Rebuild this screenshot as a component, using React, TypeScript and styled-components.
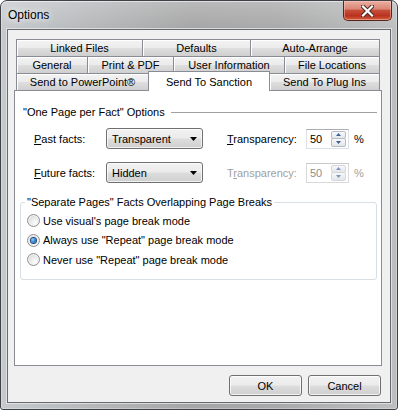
import styled, { createGlobalStyle } from 'styled-components';

const GlobalStyle = createGlobalStyle`
  html, body {
    margin: 0;
    padding: 0;
    background: #ffffff;
  }
  body {
    font-family: "Liberation Sans", Arial, sans-serif;
    font-size: 11px;
    color: #000000;
  }
  * { box-sizing: border-box; }
`;

const Window = styled.div`
  width: 398px;
  height: 410px;
  display: flex;
  flex-direction: column;
  padding: 0 6px 6px;
  border: 1px solid #3e4146;
  border-radius: 7px 7px 3px 3px;
  background:
    linear-gradient(180deg, rgba(255, 255, 255, 0.22) 0px, rgba(255, 255, 255, 0) 28px),
    linear-gradient(90deg, #c6cacd 0%, #b6b8ba 22%, #a6a6a6 48%, #a9a9a9 70%, #bcbebf 100%);
  box-shadow: inset 0 1px 0 rgba(255, 255, 255, 0.55), inset 1px 0 0 rgba(255, 255, 255, 0.3),
    inset -1px 0 0 rgba(255, 255, 255, 0.3), inset 0 -1px 0 rgba(255, 255, 255, 0.3);
`;

const TitleBar = styled.div`
  height: 28px;
  display: flex;
  align-items: flex-start;
  justify-content: space-between;
`;

const Title = styled.div`
  margin-top: 7px;
  padding-left: 1px;
  font-size: 12px;
  line-height: 15px;
  color: #000;
  text-shadow: 0 0 6px rgba(255, 255, 255, 0.95), 0 0 10px rgba(255, 255, 255, 0.7);
`;

const CloseButton = styled.div`
  width: 49px;
  height: 20px;
  margin-right: -1px;
  display: flex;
  align-items: center;
  justify-content: center;
  border: 1px solid #5b2419;
  border-top: none;
  border-radius: 0 0 5px 5px;
  background: linear-gradient(180deg, #eab0a2 0%, #db8676 42%, #c84d39 50%, #b9321e 78%, #d3603f 100%);
  box-shadow: inset 0 0 0 1px rgba(255, 210, 200, 0.45);
`;

const Client = styled.div`
  flex: 1;
  display: flex;
  flex-direction: column;
  padding: 9px 8px 6px 6px;
  background: #f0f0f0;
  border: 1px solid #676a6e;
  box-shadow: 0 0 0 1px rgba(235, 238, 240, 0.7);
`;

const TabStrip = styled.div`
  display: flex;
  flex-direction: column;
  margin: 0 2px -1px;
  position: relative;
  z-index: 2;
`;

const TabRow = styled.div`
  display: flex;
  align-items: flex-end;
  height: 18px;
  & + & {
    margin-top: -1px;
  }
`;

const Tab = styled.div<{ $w: number; $active?: boolean }>`
  width: ${p => p.$w}px;
  height: ${p => (p.$active ? 20 : 18)}px;
  flex: none;
  display: flex;
  align-items: ${p => (p.$active ? 'flex-start' : 'center')};
  justify-content: center;
  padding-top: ${p => (p.$active ? 3 : 0)}px;
  border: 1px solid #898c95;
  border-bottom: ${p => (p.$active ? 'none' : '1px solid #898c95')};
  background: ${p =>
    p.$active
      ? '#ffffff'
      : 'linear-gradient(180deg, #f3f3f3 0%, #ebebeb 48%, #dedede 52%, #cfcfcf 100%)'};
  box-shadow: ${p => (p.$active ? 'none' : 'inset 1px 1px 0 #ffffff')};
  position: relative;
  z-index: ${p => (p.$active ? 3 : 1)};
  white-space: nowrap;
  line-height: 14px;
  & + & {
    margin-left: -1px;
  }
`;

const Panel = styled.div`
  flex: 1;
  display: flex;
  flex-direction: column;
  padding: 14px 4px 0 5px;
  background: #ffffff;
  border: 1px solid #898c95;
  position: relative;
  z-index: 1;
`;

const GroupHeader = styled.div`
  display: flex;
  align-items: center;
  margin-left: 3px;
  line-height: 14px;
  height: 14px;
  &::after {
    content: '';
    flex: 1;
    margin-left: 6px;
    border-top: 1px solid #a0a0a0;
  }
`;

const FormRow = styled.div<{ $gap: number }>`
  display: flex;
  align-items: center;
  height: 21px;
  margin-top: ${p => p.$gap}px;
  padding-left: 14px;
`;

const FieldLabel = styled.span<{ $w: number; $ml?: number; $disabled?: boolean }>`
  width: ${p => p.$w}px;
  margin-left: ${p => p.$ml ?? 0}px;
  color: ${p => (p.$disabled ? '#a0a0a0' : '#000000')};
  white-space: nowrap;
`;

const Key = styled.span`
  text-decoration: underline;
`;

const Combo = styled.div`
  width: 97px;
  height: 21px;
  display: flex;
  align-items: center;
  justify-content: space-between;
  padding: 0 5px 0 5px;
  border: 1px solid #707070;
  border-radius: 3px;
  background: linear-gradient(180deg, #f2f2f2 0%, #ebebeb 48%, #dddddd 52%, #cfcfcf 100%);
  box-shadow: inset 0 0 0 1px rgba(255, 255, 255, 0.7);
`;

const SpinBox = styled.div<{ $disabled?: boolean }>`
  width: 43px;
  height: 20px;
  display: flex;
  align-items: stretch;
  justify-content: space-between;
  padding: 1px 2px 1px 3px;
  background: #ffffff;
  border: 1px solid ${p => (p.$disabled ? '#d9d9d9' : '#dbe1e8')};
  border-top-color: ${p => (p.$disabled ? '#c9c9c9' : '#abadb3')};
  color: ${p => (p.$disabled ? '#8d8d8d' : '#000000')};
`;

const SpinValue = styled.span`
  align-self: center;
`;

const SpinButtons = styled.div`
  width: 15px;
  display: flex;
  flex-direction: column;
  gap: 0;
`;

const SpinHalf = styled.div<{ $disabled?: boolean }>`
  flex: 1;
  display: flex;
  align-items: center;
  justify-content: center;
  border: 1px solid ${p => (p.$disabled ? '#d4d6d9' : '#b7bcc4')};
  border-radius: 2px;
  background: linear-gradient(180deg, #f8f8f8 0%, #e3e6ea 100%);
  & + & {
    margin-top: -1px;
  }
`;

const Percent = styled.span<{ $disabled?: boolean }>`
  margin-left: 5px;
  color: ${p => (p.$disabled ? '#a0a0a0' : '#000000')};
`;

const GroupBox = styled.fieldset`
  margin: 12px 0 0 0;
  padding: 2px 6px 9px 6px;
  border: 1px solid #d5dfe5;
  border-radius: 3px;
  min-width: 0;
`;

const Legend = styled.legend`
  padding: 0 2px;
  margin-left: -2px;
  line-height: 14px;
`;

const RadioRow = styled.div`
  height: 19.5px;
  display: flex;
  align-items: center;
  gap: 3px;
`;

const RadioDot = styled.span<{ $checked?: boolean }>`
  width: 13px;
  height: 13px;
  border-radius: 50%;
  border: 1px solid #8e8f8f;
  background: radial-gradient(circle at 65% 70%, #fdfdfd 0%, #e9e9e9 45%, #cfcfcf 100%);
  box-shadow: inset 0 0 0 1px #f4f4f4;
  display: flex;
  align-items: center;
  justify-content: center;
  &::after {
    content: '';
    display: ${p => (p.$checked ? 'block' : 'none')};
    width: 5px;
    height: 5px;
    border-radius: 50%;
    background: radial-gradient(circle at 35% 35%, #8fd0f5 0%, #2d7ec9 55%, #1a4d87 100%);
    box-shadow: 0 0 0 1px #1c4a7e;
  }
`;

const ButtonRow = styled.div`
  display: flex;
  justify-content: flex-end;
  gap: 6px;
  margin-top: 9px;
  margin-right: 1px;
`;

const Button = styled.div`
  width: 73px;
  height: 21px;
  display: flex;
  align-items: center;
  justify-content: center;
  border: 1px solid #707070;
  border-radius: 3px;
  background: linear-gradient(180deg, #f2f2f2 0%, #ebebeb 48%, #dddddd 52%, #cfcfcf 100%);
  box-shadow: inset 0 0 0 1px rgba(255, 255, 255, 0.75);
`;

const DownArrow = () => (
  <svg width="7" height="4" viewBox="0 0 7 4">
    <path d="M0 0 H7 L3.5 4 Z" fill="#000" />
  </svg>
);

const SpinArrow = ({ up, dim }: { up?: boolean; dim?: boolean }) => (
  <svg width="5" height="3" viewBox="0 0 5 3">
    <path d={up ? 'M0 3 H5 L2.5 0 Z' : 'M0 0 H5 L2.5 3 Z'} fill={dim ? '#7d95bf' : '#3d5f9a'} />
  </svg>
);

const Spinner = ({ disabled }: { disabled?: boolean }) => (
  <SpinBox $disabled={disabled}>
    <SpinValue>50</SpinValue>
    <SpinButtons>
      <SpinHalf $disabled={disabled}>
        <SpinArrow up dim={disabled} />
      </SpinHalf>
      <SpinHalf $disabled={disabled}>
        <SpinArrow dim={disabled} />
      </SpinHalf>
    </SpinButtons>
  </SpinBox>
);

const tabRows: { label: string; w: number; active?: boolean }[][] = [
  [
    { label: 'Linked Files', w: 127 },
    { label: 'Defaults', w: 109 },
    { label: 'Auto-Arrange', w: 130 },
  ],
  [
    { label: 'General', w: 72 },
    { label: 'Print & PDF', w: 87 },
    { label: 'User Information', w: 112 },
    { label: 'File Locations', w: 96 },
  ],
  [
    { label: 'Send to PowerPoint®', w: 133 },
    { label: 'Send To Sanction', w: 122, active: true },
    { label: 'Send To Plug Ins', w: 111 },
  ],
];

const radios = [
  { label: "Use visual's page break mode", checked: false },
  { label: 'Always use "Repeat" page break mode', checked: true },
  { label: 'Never use "Repeat" page break mode', checked: false },
];

export default function App() {
  return (
    <>
      <GlobalStyle />
      <Window>
        <TitleBar>
          <Title>Options</Title>
          <CloseButton>
            <svg width="13" height="12" viewBox="0 0 13 12">
              <path d="M2 1.5 L11 10.5 M11 1.5 L2 10.5" stroke="#4a2a24" strokeWidth="4.2" strokeLinecap="square" />
              <path d="M2 1.5 L11 10.5 M11 1.5 L2 10.5" stroke="#ffffff" strokeWidth="2.2" strokeLinecap="square" />
            </svg>
          </CloseButton>
        </TitleBar>
        <Client>
          <TabStrip>
            {tabRows.map((row, i) => (
              <TabRow key={i}>
                {row.map(t => (
                  <Tab key={t.label} $w={t.w} $active={t.active}>
                    {t.label}
                  </Tab>
                ))}
              </TabRow>
            ))}
          </TabStrip>
          <Panel>
            <GroupHeader>"One Page per Fact" Options</GroupHeader>
            <FormRow $gap={9}>
              <FieldLabel $w={72}>
                <Key>P</Key>ast facts:
              </FieldLabel>
              <Combo>
                <span>Transparent</span>
                <DownArrow />
              </Combo>
              <FieldLabel $w={79} $ml={24}>
                <Key>T</Key>ransparency:
              </FieldLabel>
              <Spinner />
              <Percent>%</Percent>
            </FormRow>
            <FormRow $gap={13}>
              <FieldLabel $w={72}>
                <Key>F</Key>uture facts:
              </FieldLabel>
              <Combo>
                <span>Hidden</span>
                <DownArrow />
              </Combo>
              <FieldLabel $w={79} $ml={24} $disabled>
                T<Key>r</Key>ansparency:
              </FieldLabel>
              <Spinner disabled />
              <Percent $disabled>%</Percent>
            </FormRow>
            <GroupBox>
              <Legend>"Separate Pages" Facts Overlapping Page Breaks</Legend>
              {radios.map(r => (
                <RadioRow key={r.label}>
                  <RadioDot $checked={r.checked} />
                  <span>{r.label}</span>
                </RadioRow>
              ))}
            </GroupBox>
          </Panel>
          <ButtonRow>
            <Button>OK</Button>
            <Button>Cancel</Button>
          </ButtonRow>
        </Client>
      </Window>
    </>
  );
}
